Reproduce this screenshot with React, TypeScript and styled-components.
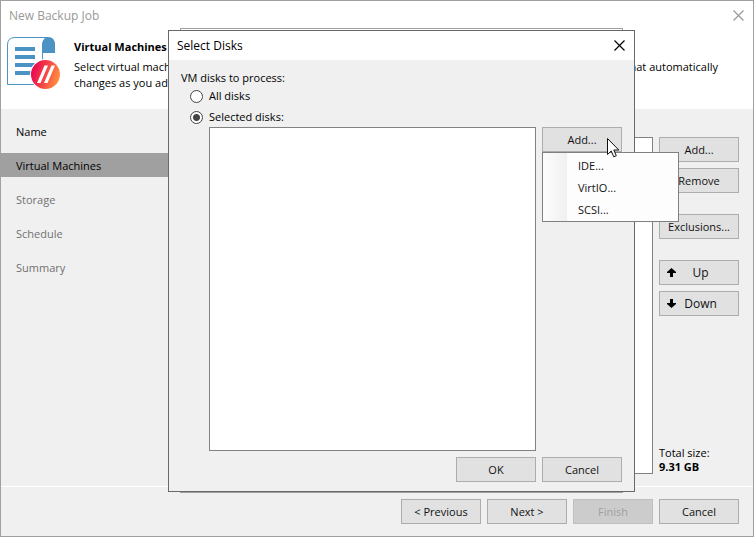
import React from "react";
import styled, { createGlobalStyle, css } from "styled-components";

const GlobalStyle = createGlobalStyle`
  *, *::before, *::after { box-sizing: border-box; }
  html, body, #root { height: 100%; margin: 0; }
  body {
    background: #f0f0f0;
    color: #111;
    font: 11px/16px "Open Sans", "Noto Sans", sans-serif;
  }
  button, input { font: inherit; color: inherit; margin: 0; }
`;

const Window = styled.div`
  position: relative;
  display: flex;
  flex-direction: column;
  min-height: 100vh;
  border: 1px solid #a0a0a0;
  background: #f0f0f0;
`;

const TitleBar = styled.header<{ $inactive?: boolean }>`
  display: flex;
  align-items: center;
  justify-content: space-between;
  height: 29px;
  flex: none;
  padding: 0 9px 0 8px;
  background: #fff;
  color: ${(p) => (p.$inactive ? "#999" : "#000")};
`;

const Title = styled.h1`
  margin: 0;
  font-size: 12px;
  font-weight: 400;
`;

const CloseButton = styled.button`
  display: flex;
  padding: 0;
  border: 0;
  background: none;
`;

const Banner = styled.section`
  display: flex;
  gap: 13px;
  height: 79px;
  flex: none;
  padding: 7px 35px 0 6px;
  background: #fff;
`;

const BannerText = styled.div`
  flex: 1;
  padding-top: 2px;
  color: #000;
`;

const BannerTitle = styled.h2`
  margin: 0 0 4px;
  font-size: 11px;
  line-height: 16px;
  font-weight: 700;
`;

const BannerLine = styled.div`
  display: flex;
  justify-content: space-between;
`;

const Body = styled.div`
  display: flex;
  flex: 1;
`;

const Steps = styled.nav`
  display: flex;
  flex-direction: column;
  gap: 10px;
  width: 180px;
  padding-top: 10px;
`;

const Step = styled.a<{ $state: "done" | "current" | "pending" }>`
  padding: 5px 15px 3px;
  text-decoration: none;
  color: ${(p) => (p.$state === "pending" ? "#707070" : "#000")};
  background: ${(p) => (p.$state === "current" ? "#a0a0a0" : "transparent")};
`;

const Workspace = styled.main`
  display: flex;
  flex: 1;
  gap: 6px;
  padding: 28px 14px 12px 10px;
`;

const ListBox = styled.div`
  flex: 1;
  border: 1px solid #828282;
  background: #fff;
`;

const Actions = styled.aside`
  display: flex;
  flex-direction: column;
  gap: 21px;
  width: 80px;
`;

const ActionGroup = styled.div`
  display: flex;
  flex-direction: column;
  gap: 6px;
`;

const Button = styled.button<{ $icon?: boolean }>`
  width: 80px;
  height: 25px;
  padding: 0;
  border: 1px solid #adadad;
  background: #e1e1e1;
  white-space: nowrap;
  &:disabled {
    color: #a0a0a0;
    background: #ccc;
    border-color: #bfbfbf;
  }
  ${(p) =>
    p.$icon &&
    css`
      display: grid;
      grid-template-columns: 9px 1fr 6px;
      align-items: center;
      padding: 0 7px;
      font-size: 12px;
    `}
`;

const TotalSize = styled.div`
  display: flex;
  flex-direction: column;
  margin-top: auto;
  line-height: 14px;
  white-space: nowrap;
  color: #000;
`;

const Footer = styled.footer`
  display: flex;
  justify-content: flex-end;
  gap: 6px;
  padding: 12px 14px;
  border-top: 1px solid #fff;
`;

const BackPanel = styled.div`
  position: absolute;
  inset: 27px 130px 43px 179px;
  border: 1px solid #a0a0a0;
  background: #fff;
`;

const Dialog = styled.div`
  position: absolute;
  inset: 29px 118px 44px 167px;
  display: flex;
  flex-direction: column;
  border: 1px solid #696969;
  background: #f0f0f0;
`;

const DialogForm = styled.form`
  display: flex;
  flex-direction: column;
  flex: 1;
  padding: 10px 12px 9px;
`;

const Fields = styled.fieldset`
  display: flex;
  flex-direction: column;
  gap: 5px;
  margin: 0 0 2px;
  padding: 0;
  border: 0;
  color: #000;
`;

const Legend = styled.legend`
  padding: 0;
  margin-bottom: 2px;
`;

const RadioLabel = styled.label`
  display: flex;
  align-items: center;
  gap: 6px;
  padding-left: 9px;
`;

const Radio = styled.input`
  appearance: none;
  width: 13px;
  height: 13px;
  border: 1px solid #444;
  border-radius: 50%;
  background: #fff;
  &:checked {
    background: radial-gradient(circle, #444 3px, #fff 4px);
  }
`;

const DiskArea = styled.div`
  display: flex;
  flex: 1;
  gap: 6px;
  padding-left: 28px;
`;

const DialogButtons = styled.div`
  display: flex;
  justify-content: flex-end;
  gap: 6px;
  padding-top: 6px;
`;

const MenuAnchor = styled.div`
  position: relative;
  height: 25px;
`;

const Menu = styled.div`
  position: absolute;
  top: 25px;
  left: 0;
  width: 137px;
  padding: 1px;
  border: 1px solid #808080;
  background: linear-gradient(to right, #fdfdfd, #f0f0f0 24px, #fdfdfd 24px);
`;

const MenuItem = styled.button`
  display: block;
  width: 100%;
  height: 22px;
  padding: 1px 0 0 34px;
  border: 0;
  background: none;
  text-align: left;
`;

const Pointer = styled.svg`
  position: absolute;
  top: 11px;
  left: 65px;
  pointer-events: none;
`;

const CloseIcon = () => (
  <svg width="11" height="11" viewBox="0 0 11 11" stroke="currentColor" fill="none" aria-hidden="true">
    <path d="M.5 .5l10 10M10.5 .5l-10 10" strokeWidth="1.2" />
  </svg>
);

const JobIcon = () => (
  <svg width="54" height="54" viewBox="0 0 54 54" aria-hidden="true">
    <defs>
      <linearGradient id="badge" x1="0" x2="1" y1="0.3" y2="0.6">
        <stop offset="0" stopColor="#e5004f" />
        <stop offset="0.45" stopColor="#f43c48" />
        <stop offset="1" stopColor="#ff9440" />
      </linearGradient>
    </defs>
    <path d="M.5 47.5V8Q.5 .5 8 .5H41Q35.500 2 35.500 9V47.500Z" fill="#fff" stroke="#4a93c3" />
    <path d="M35 16V8Q36 0 41 0Q48 0 48 8V16Z" fill="#4a93c3" />
    <path d="M8 12H28M8 20H28M8 28H28M8 36H28" stroke="#4a93c3" strokeWidth="4" />
    <circle cx="38.500" cy="37.500" r="15.500" fill="#fff" />
    <circle cx="38.500" cy="37.500" r="14.500" fill="url(#badge)" />
    <path d="M30 46L37.500 28.500H41L33.500 46ZM37 46L44.500 28.500H48L40.500 46Z" fill="#fff" />
  </svg>
);

const ArrowIcon = ({ down }: { down?: boolean }) => (
  <svg width="9" height="9" viewBox="0 0 9 9" aria-hidden="true">
    <path
      d={down ? "M3 0H6V4H9V5L4.500 9L0 5V4H3Z" : "M3 9H6V5H9V4L4.500 0L0 4V5H3Z"}
      fill="#000"
    />
  </svg>
);

const steps = [
  { label: "Name", state: "done" },
  { label: "Virtual Machines", state: "current" },
  { label: "Storage", state: "pending" },
  { label: "Schedule", state: "pending" },
  { label: "Summary", state: "pending" },
] as const;

export default function App() {
  return (
    <>
      <GlobalStyle />
      <Window>
        <TitleBar $inactive>
          <Title>New Backup Job</Title>
          <CloseButton aria-label="Close wizard">
            <CloseIcon />
          </CloseButton>
        </TitleBar>
        <Banner>
          <JobIcon />
          <BannerText>
            <BannerTitle>Virtual Machines</BannerTitle>
            <BannerLine>
              <span>Select virtual machines</span>
              <span>that automatically</span>
            </BannerLine>
            <BannerLine>changes as you add</BannerLine>
          </BannerText>
        </Banner>
        <Body>
          <Steps>
            {steps.map((s) => (
              <Step key={s.label} href="#" $state={s.state}>
                {s.label}
              </Step>
            ))}
          </Steps>
          <Workspace>
            <ListBox />
            <Actions>
              <ActionGroup>
                <Button>Add...</Button>
                <Button>Remove</Button>
              </ActionGroup>
              <Button>Exclusions...</Button>
              <ActionGroup>
                <Button $icon>
                  <ArrowIcon />
                  Up
                </Button>
                <Button $icon>
                  <ArrowIcon down />
                  Down
                </Button>
              </ActionGroup>
              <TotalSize>
                <span>Total size:</span>
                <strong>9.31 GB</strong>
              </TotalSize>
            </Actions>
          </Workspace>
        </Body>
        <Footer>
          <Button>&lt; Previous</Button>
          <Button>Next &gt;</Button>
          <Button disabled>Finish</Button>
          <Button>Cancel</Button>
        </Footer>

        <BackPanel />
        <Dialog role="dialog" aria-labelledby="disks-title">
          <TitleBar>
            <Title id="disks-title">Select Disks</Title>
            <CloseButton aria-label="Close">
              <CloseIcon />
            </CloseButton>
          </TitleBar>
          <DialogForm onSubmit={(e) => e.preventDefault()}>
            <Fields>
              <Legend>VM disks to process:</Legend>
              <RadioLabel>
                <Radio type="radio" name="disks" />
                All disks
              </RadioLabel>
              <RadioLabel>
                <Radio type="radio" name="disks" defaultChecked />
                Selected disks:
              </RadioLabel>
            </Fields>
            <DiskArea>
              <ListBox />
              <MenuAnchor>
                <Button type="button" aria-haspopup="menu" aria-expanded="true">
                  Add...
                </Button>
                <Menu role="menu">
                  <MenuItem type="button" role="menuitem">IDE...</MenuItem>
                  <MenuItem type="button" role="menuitem">VirtIO...</MenuItem>
                  <MenuItem type="button" role="menuitem">SCSI...</MenuItem>
                </Menu>
                <Pointer width="13" height="20" viewBox="0 0 13 20" aria-hidden="true">
                  <path
                    d="M.5 .5V16.500L4.200 13L6.800 18.800L9.300 17.700L6.800 12H11.800Z"
                    fill="#fff"
                    stroke="#111"
                  />
                </Pointer>
              </MenuAnchor>
            </DiskArea>
            <DialogButtons>
              <Button type="submit">OK</Button>
              <Button type="button">Cancel</Button>
            </DialogButtons>
          </DialogForm>
        </Dialog>
      </Window>
    </>
  );
}
